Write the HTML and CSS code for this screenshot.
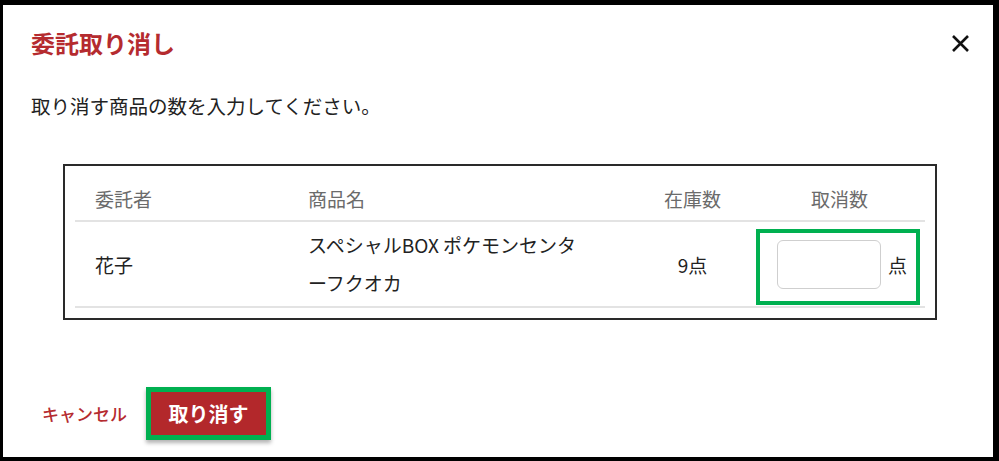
FILE: index.html
```html
<!DOCTYPE html>
<html lang="ja">

<head>
    <meta charset="UTF-8">
    <meta name="viewport" content="width=device-width, initial-scale=1.0">
    <title>委託取り消し</title>
    <link rel="stylesheet" href="styles.css">
</head>

<body>
    <div class="dialog">
        <header class="dialog-header">
            <h1>委託取り消し</h1>
            <button class="close-btn" aria-label="閉じる">
                <svg width="19" height="19" viewBox="0 0 19 19">
                    <path d="M2 2 L17 17 M17 2 L2 17" stroke="#111" stroke-width="2.6" fill="none"/>
                </svg>
            </button>
        </header>

        <p class="message">取り消す商品の数を入力してください。</p>

        <div class="table-box">
            <div class="grid head">
                <div class="cell">委託者</div>
                <div class="cell">商品名</div>
                <div class="cell center">在庫数</div>
                <div class="cell center last">取消数</div>
            </div>
            <div class="grid row">
                <div class="cell">花子</div>
                <div class="cell name">スペシャルBOX ポケモンセンターフクオカ</div>
                <div class="cell center">9点</div>
                <div class="cell center last qty-cell">
                    <div class="qty-box">
                        <input type="text" class="qty-input">
                        <span class="unit">点</span>
                    </div>
                </div>
            </div>
        </div>

        <footer class="dialog-footer">
            <button class="cancel-btn">キャンセル</button>
            <div class="confirm-wrap">
                <button class="confirm-btn">取り消す</button>
            </div>
        </footer>
    </div>
</body>

</html>
```

FILE: styles.css
```css
* {
    box-sizing: border-box;
    margin: 0;
    padding: 0;
}

body {
    font-family: 'Noto Sans CJK JP', 'Noto Sans', sans-serif;
    background-color: #000;
    color: #222;
    height: 461px;
    overflow: hidden;
    padding: 5px 6px 4px 3px;
}

.dialog {
    background: #fff;
    height: 452px;
    display: flex;
    flex-direction: column;
}

.dialog-header {
    display: flex;
    justify-content: space-between;
    align-items: center;
    padding: 18px 23px 0 28px;
}

.dialog-header h1 {
    font-size: 24px;
    line-height: 40px;
    font-weight: bold;
    color: #b52b2f;
}

.close-btn {
    background: none;
    border: none;
    width: 19px;
    height: 19px;
    display: flex;
    cursor: pointer;
}

.message {
    font-size: 19.5px;
    line-height: 30px;
    padding: 28px 0 0 28px;
}

.table-box {
    margin: 43px 0 0 60px;
    width: 874px;
    border: 2px solid #2a2a2a;
    padding: 10px;
}

.grid {
    display: grid;
    grid-template-columns: 213px 330px 149px minmax(0, 1fr);
    align-items: center;
    border-bottom: 2px solid #e3e3e3;
    font-size: 19px;
}

.head {
    height: 46px;
    color: #6b6b6b;
}

.row {
    height: 86px;
}

.cell {
    padding-left: 20px;
}

.cell.center {
    padding-left: 0;
    text-align: center;
}

.cell.last {
    padding-right: 13px;
}

.name {
    line-height: 38px;
    padding-right: 36px;
}

.qty-cell {
    display: flex;
}

.qty-box {
    display: flex;
    flex-shrink: 0;
    align-items: center;
    gap: 7px;
    border: 4px solid #00b050;
    padding: 7px 9px 12px 17px;
    margin: 6px -6px 0 -11px;
}

.qty-input {
    width: 104px;
    height: 49px;
    border: 1px solid #cfcfcf;
    border-radius: 6px;
    outline: none;
}

.unit {
    font-size: 19px;
}

.dialog-footer {
    margin-top: auto;
    display: flex;
    align-items: center;
    padding: 0 0 17px 39px;
    gap: 19px;
}

.cancel-btn {
    background: none;
    border: none;
    font-family: inherit;
    font-size: 17px;
    font-weight: 500;
    color: #b52b2f;
    cursor: pointer;
}

.confirm-wrap {
    border: 5px solid #00b050;
    box-shadow: 0 3px 4px rgba(0, 0, 0, 0.3);
}

.confirm-btn {
    display: block;
    width: 115px;
    height: 43px;
    background-color: #b3282b;
    color: #fff;
    border: none;
    font-family: inherit;
    font-size: 20px;
    font-weight: bold;
    cursor: pointer;
}
```
